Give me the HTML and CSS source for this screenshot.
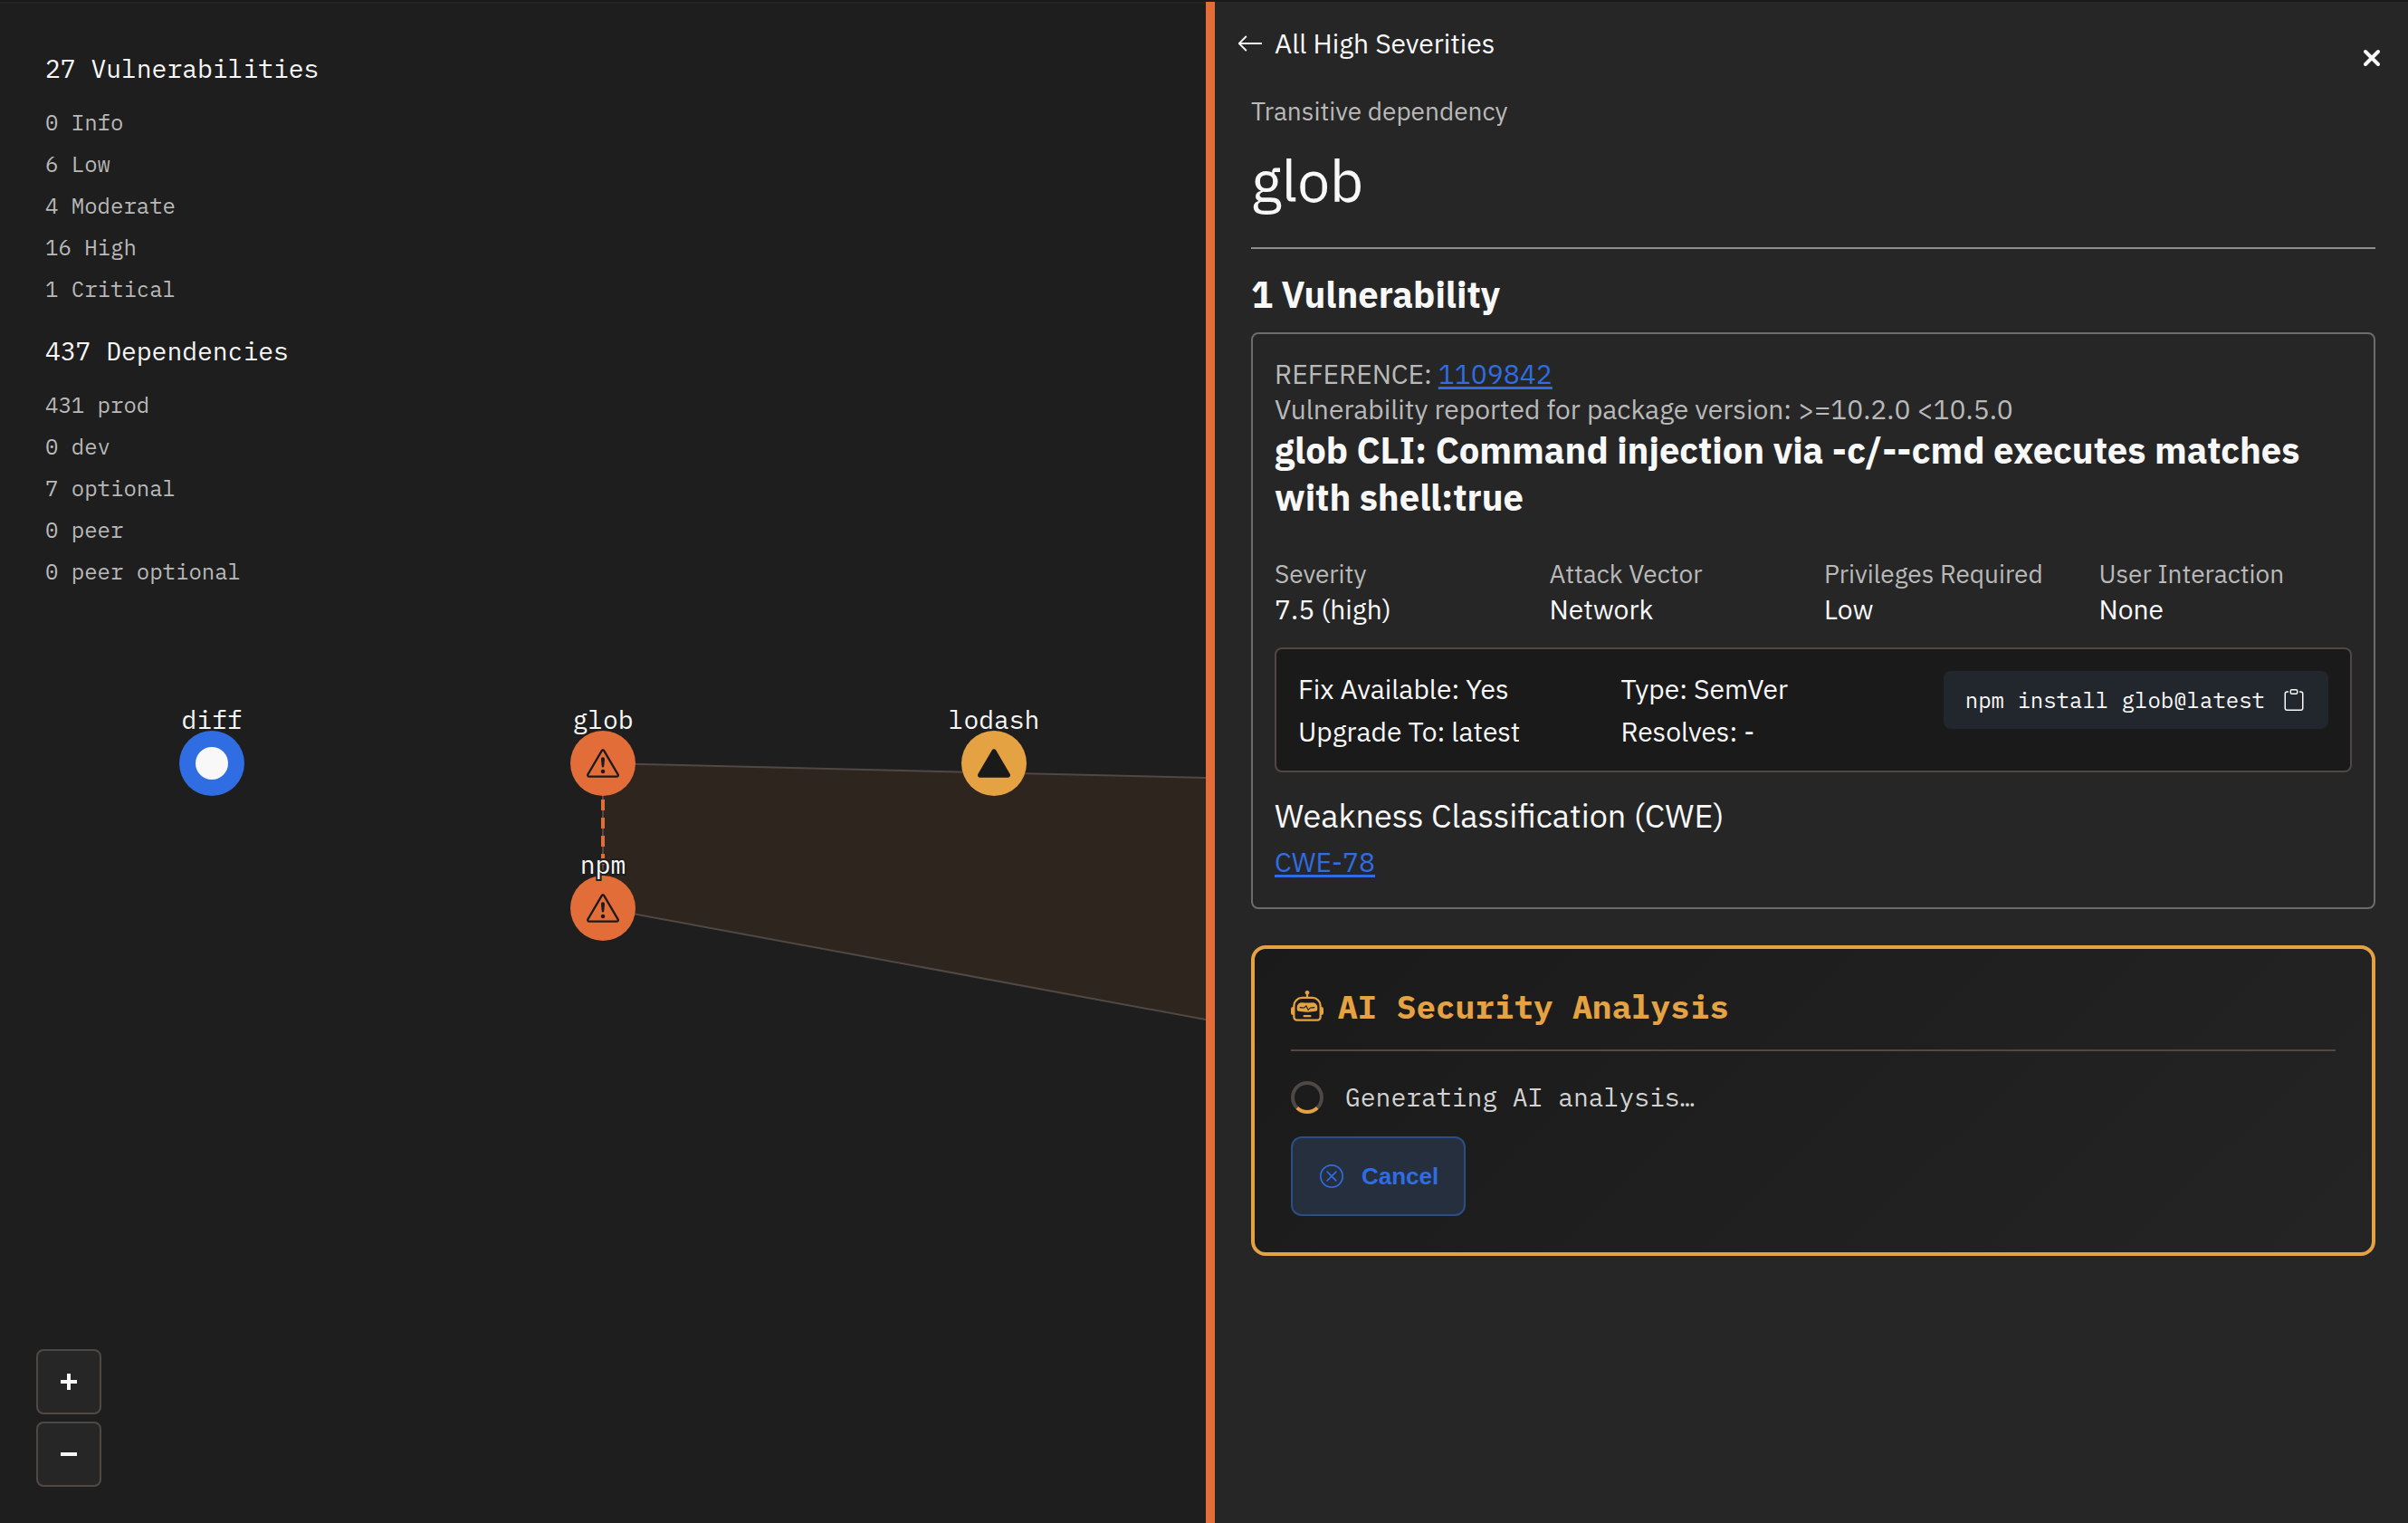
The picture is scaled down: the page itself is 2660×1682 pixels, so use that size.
FILE: index.html
```html
<!DOCTYPE html>
<html lang="en">
<head>
<meta charset="utf-8">
<title>Dependency vulnerabilities</title>
<link rel="stylesheet" href="styles.css">
</head>
<body>
<div class="app">
  <main class="graph">
    <svg class="graph-canvas" role="img" aria-label="Dependency graph">
      <path class="hull" d="M666 843 L1332 859 L4000 923 L4000 1618 L1332 1126 L666 1003 Z"/>
      <line class="link" x1="666" y1="843" x2="666" y2="1003"/>
      <g>
        <circle class="low" cx="234" cy="843" r="36"/>
        <circle class="dot" cx="234" cy="843" r="18"/>
        <text class="node-label" x="234" y="805">diff</text>
      </g>
      <g>
        <circle class="high" cx="666" cy="843" r="36"/>
        <svg class="glyph" x="648" y="825" width="36" height="36" viewBox="0 0 16 16"><path d="M7.938 2.016A.13.13 0 0 1 8.002 2a.13.13 0 0 1 .063.016.15.15 0 0 1 .054.057l6.857 11.667c.036.06.035.124.002.183a.2.2 0 0 1-.054.06.1.1 0 0 1-.066.017H1.146a.1.1 0 0 1-.066-.017.2.2 0 0 1-.054-.06.18.18 0 0 1 .002-.183L7.884 2.073a.15.15 0 0 1 .054-.057m1.044-.45a1.13 1.13 0 0 0-1.96 0L.165 13.233c-.457.778.091 1.767.98 1.767h13.713c.889 0 1.438-.99.98-1.767z"/><path d="M7.002 12a1 1 0 1 1 2 0 1 1 0 0 1-2 0M7.1 5.995a.905.905 0 1 1 1.8 0l-.35 3.507a.552.552 0 0 1-1.1 0z"/></svg>
        <text class="node-label" x="666" y="805">glob</text>
      </g>
      <g>
        <circle class="high" cx="666" cy="1003" r="36"/>
        <svg class="glyph" x="648" y="985" width="36" height="36" viewBox="0 0 16 16"><path d="M7.938 2.016A.13.13 0 0 1 8.002 2a.13.13 0 0 1 .063.016.15.15 0 0 1 .054.057l6.857 11.667c.036.06.035.124.002.183a.2.2 0 0 1-.054.06.1.1 0 0 1-.066.017H1.146a.1.1 0 0 1-.066-.017.2.2 0 0 1-.054-.06.18.18 0 0 1 .002-.183L7.884 2.073a.15.15 0 0 1 .054-.057m1.044-.45a1.13 1.13 0 0 0-1.96 0L.165 13.233c-.457.778.091 1.767.98 1.767h13.713c.889 0 1.438-.99.98-1.767z"/><path d="M7.002 12a1 1 0 1 1 2 0 1 1 0 0 1-2 0M7.1 5.995a.905.905 0 1 1 1.8 0l-.35 3.507a.552.552 0 0 1-1.1 0z"/></svg>
        <text class="node-label" x="666" y="965">npm</text>
      </g>
      <g>
        <circle class="moderate" cx="1098" cy="843" r="36"/>
        <svg class="glyph" x="1080" y="825" width="36" height="36" viewBox="0 0 16 16"><path d="M7.022 1.566a1.13 1.13 0 0 1 1.96 0l6.857 11.667c.457.778-.092 1.767-.98 1.767H1.144c-.889 0-1.437-.99-.98-1.767z"/></svg>
        <text class="node-label" x="1098" y="805">lodash</text>
      </g>
    </svg>

    <div class="stats">
      <section>
        <h2>27 Vulnerabilities</h2>
        <ul>
          <li>0 Info</li>
          <li>6 Low</li>
          <li>4 Moderate</li>
          <li>16 High</li>
          <li>1 Critical</li>
        </ul>
      </section>
      <section>
        <h2>437 Dependencies</h2>
        <ul>
          <li>431 prod</li>
          <li>0 dev</li>
          <li>7 optional</li>
          <li>0 peer</li>
          <li>0 peer optional</li>
        </ul>
      </section>
    </div>

    <div class="zoom">
      <button type="button" aria-label="Zoom in"><svg width="18" height="18" viewBox="0 0 18 18"><path d="M0 9h18M9 0v18"/></svg></button>
      <button type="button" aria-label="Zoom out"><svg width="18" height="18" viewBox="0 0 18 18"><path d="M0 9h18"/></svg></button>
    </div>
  </main>

  <aside class="panel">
    <header class="panel-head">
      <a class="back" href="#high">
        <svg width="30" height="30" viewBox="0 0 16 16" fill="currentColor"><path d="M15 8a.5.5 0 0 0-.5-.5H2.707l3.147-3.146a.5.5 0 1 0-.708-.708l-4 4a.5.5 0 0 0 0 .708l4 4a.5.5 0 0 0 .708-.708L2.707 8.5H14.5A.5.5 0 0 0 15 8"/></svg>
        <span>All High Severities</span>
      </a>
      <button class="close" type="button" aria-label="Close"><svg width="20" height="20" viewBox="0 0 20 20"><path d="M3 3l14 14M17 3L3 17"/></svg></button>
    </header>

    <div class="panel-body">
      <p class="kind">Transitive dependency</p>
      <h1>glob</h1>
      <h2 class="count">1 Vulnerability</h2>

      <article class="card">
        <p class="muted">REFERENCE: <a href="#1109842">1109842</a></p>
        <p class="muted">Vulnerability reported for package version: &gt;=10.2.0 &lt;10.5.0</p>
        <h3>glob CLI: Command injection via -c/--cmd executes matches with shell:true</h3>
        <dl class="metrics">
          <div><dt>Severity</dt><dd>7.5 (high)</dd></div>
          <div><dt>Attack Vector</dt><dd>Network</dd></div>
          <div><dt>Privileges Required</dt><dd>Low</dd></div>
          <div><dt>User Interaction</dt><dd>None</dd></div>
        </dl>
        <div class="fix">
          <div class="fix-col"><p>Fix Available: Yes</p><p>Upgrade To: latest</p></div>
          <div class="fix-col"><p>Type: SemVer</p><p>Resolves: -</p></div>
          <button class="copy" type="button">
            <span>npm install glob@latest</span>
            <svg width="24" height="24" viewBox="0 0 16 16" fill="currentColor"><path d="M4 1.5H3a2 2 0 0 0-2 2V14a2 2 0 0 0 2 2h10a2 2 0 0 0 2-2V3.5a2 2 0 0 0-2-2h-1v1h1a1 1 0 0 1 1 1V14a1 1 0 0 1-1 1H3a1 1 0 0 1-1-1V3.5a1 1 0 0 1 1-1h1z"/><path d="M9.5 1a.5.5 0 0 1 .5.5v1a.5.5 0 0 1-.5.5h-3a.5.5 0 0 1-.5-.5v-1a.5.5 0 0 1 .5-.5zm-3-1A1.5 1.5 0 0 0 5 1.5v1A1.5 1.5 0 0 0 6.5 4h3A1.5 1.5 0 0 0 11 2.5v-1A1.5 1.5 0 0 0 9.5 0z"/></svg>
          </button>
        </div>
        <h4>Weakness Classification (CWE)</h4>
        <p><a href="#cwe-78">CWE-78</a></p>
      </article>

      <section class="ai">
        <h2 class="ai-title">
          <svg width="36" height="36" viewBox="0 0 16 16" fill="currentColor"><path d="M6 12.5a.5.5 0 0 1 .5-.5h3a.5.5 0 0 1 0 1h-3a.5.5 0 0 1-.5-.5M3 8.062C3 6.76 4.235 5.765 5.53 5.886a26.6 26.6 0 0 0 4.94 0C11.765 5.765 13 6.76 13 8.062v1.157a.93.93 0 0 1-.765.935c-.845.147-2.34.346-4.235.346s-3.39-.2-4.235-.346A.93.93 0 0 1 3 9.219zm4.542-.827a.25.25 0 0 0-.217.068l-.92.9a25 25 0 0 1-1.871-.183.25.25 0 0 0-.068.495c.55.076 1.232.149 2.02.193a.25.25 0 0 0 .189-.071l.754-.736.847 1.71a.25.25 0 0 0 .404.062l.932-.97a25 25 0 0 0 1.922-.188.25.25 0 0 0-.068-.495c-.538.074-1.207.145-1.98.189a.25.25 0 0 0-.166.076l-.754.785-.842-1.7a.25.25 0 0 0-.182-.135"/><path d="M8.5 1.866a1 1 0 1 0-1 0V3h-2A4.5 4.5 0 0 0 1 7.5V8a1 1 0 0 0-1 1v2a1 1 0 0 0 1 1v1a2 2 0 0 0 2 2h10a2 2 0 0 0 2-2v-1a1 1 0 0 0 1-1V9a1 1 0 0 0-1-1v-.5A4.5 4.5 0 0 0 10.5 3h-2zM14 7.5V13a1 1 0 0 1-1 1H3a1 1 0 0 1-1-1V7.5A3.5 3.5 0 0 1 5.5 4h5A3.5 3.5 0 0 1 14 7.5"/></svg>
          <span>AI Security Analysis</span>
        </h2>
        <p class="progress"><span class="spinner"></span><span>Generating AI analysis…</span></p>
        <button class="cancel" type="button">
          <svg width="26" height="26" viewBox="0 0 16 16" fill="currentColor"><path d="M8 15A7 7 0 1 1 8 1a7 7 0 0 1 0 14m0 1A8 8 0 1 0 8 0a8 8 0 0 0 0 16"/><path d="M4.646 4.646a.5.5 0 0 1 .708 0L8 7.293l2.646-2.647a.5.5 0 0 1 .708.708L8.707 8l2.647 2.646a.5.5 0 0 1-.708.708L8 8.707l-2.646 2.647a.5.5 0 0 1-.708-.708L7.293 8 4.646 5.354a.5.5 0 0 1 0-.708"/></svg>
          <span>Cancel</span>
        </button>
      </section>
    </div>
  </aside>
</div>
</body>
</html>
```
FILE: styles.css
```css
:root {
  --bg: #1e1e1e;
  --panel: #262626;
  --inset: #1a1a1a;
  --text: #f8f8f8;
  --muted: #b9b9b9;
  --line: #504844;
  --orange: #e26d38;
  --amber: #e5a243;
  --blue: #306ce2;
  --sans: "IBM Plex Sans", Roboto, sans-serif;
  --mono: "IBM Plex Mono", "Liberation Mono", monospace;
}

* {
  box-sizing: border-box;
  margin: 0;
  padding: 0;
}

body {
  background: var(--bg);
  color: var(--text);
  font: 30px/39px var(--sans);
}

ul {
  list-style: none;
}

button {
  color: inherit;
  font: inherit;
  border: 0;
  background: none;
  display: flex;
  align-items: center;
  justify-content: center;
}

a {
  color: var(--blue);
  text-underline-offset: 3px;
  text-decoration-thickness: 3px;
}

svg {
  flex: none;
}

.app {
  display: grid;
  grid-template-columns: minmax(0, 1fr) calc(50% - 2px);
  min-height: 100vh;
  border-top: 2px solid #1a1a1a;
}

/* Dependency graph */

.graph {
  position: relative;
  display: flex;
  flex-direction: column;
  justify-content: space-between;
  padding: 54px 40px 40px;
  border-top: 2px solid #232323;
}

.graph-canvas {
  position: absolute;
  inset: -4px 0 0;
  width: 100%;
  height: 100%;
}

.hull {
  fill: #2e251f;
  stroke: var(--line);
  stroke-width: 2px;
}

.link {
  stroke: var(--orange);
  stroke-width: 4px;
  stroke-dasharray: 12 8;
}

.low {
  fill: var(--blue);
}

.high {
  fill: var(--orange);
}

.moderate {
  fill: var(--amber);
}

.dot {
  fill: var(--text);
}

.glyph {
  fill: var(--inset);
}

.node-label {
  fill: var(--text);
  stroke: var(--bg);
  stroke-width: 4px;
  paint-order: stroke;
  text-anchor: middle;
  font: 28px var(--mono);
}

.stats {
  position: relative;
  display: grid;
  gap: 28px;
  padding-left: 10px;
  font-family: var(--mono);
}

.stats h2 {
  font-size: 28px;
  line-height: 36px;
  font-weight: 400;
  margin-bottom: 18px;
}

.stats li {
  font-size: 24px;
  line-height: 46px;
  color: var(--muted);
}

.zoom {
  position: relative;
  display: grid;
  gap: 8px;
  justify-content: start;
}

.zoom button {
  width: 72px;
  height: 72px;
  background: var(--panel);
  border: 2px solid var(--line);
  border-radius: 8px;
}

.zoom svg,
.close svg {
  fill: none;
  stroke: currentColor;
  stroke-width: 4px;
}

/* Detail panel */

.panel {
  background: var(--panel);
  border-left: 10px solid var(--orange);
  padding: 26px 36px 40px 24px;
}

.panel-head {
  display: flex;
  align-items: flex-start;
  justify-content: space-between;
}

.back {
  display: flex;
  align-items: center;
  gap: 12px;
  color: var(--text);
  text-decoration: none;
}

.close {
  width: 44px;
  height: 44px;
  margin: 14px -18px -14px 0;
}

.close svg {
  stroke-linecap: round;
}

.panel-body {
  padding-left: 16px;
}

.kind {
  margin-top: 33px;
  font-size: 28px;
  line-height: 36px;
  color: var(--muted);
}

h1 {
  padding: 16px 0 32px;
  font-size: 64px;
  line-height: 84px;
  font-weight: 400;
  border-bottom: 2px solid #8f8f8f;
}

.count,
.card h3 {
  font-size: 40px;
  line-height: 52px;
  font-weight: 700;
}

.count {
  margin: 24px 0 16px;
}

.card {
  padding: 24px 24px 31px;
  border: 2px solid #6c6c6c;
  border-radius: 8px;
}

.muted {
  color: var(--muted);
}

.metrics {
  display: grid;
  grid-template-columns: repeat(4, 1fr);
  gap: 24px;
  margin: 40px 0 23px;
}

.metrics dt {
  font-size: 28px;
  line-height: 38px;
  color: var(--muted);
}

.fix {
  display: grid;
  grid-template-columns: 1fr 1fr auto;
  align-items: start;
  gap: 24px;
  padding: 24px;
  background: var(--inset);
  border: 2px solid var(--line);
  border-radius: 8px;
}

.fix-col {
  display: grid;
  gap: 8px;
}

.copy {
  height: 64px;
  gap: 20px;
  padding: 0 26px 0 24px;
  background: #22262d;
  border-radius: 8px;
  font: 24px/32px var(--mono);
}

.card h4 {
  margin: 24px 0 8px;
  font-size: 36px;
  line-height: 47px;
  font-weight: 400;
}

.ai {
  margin-top: 40px;
  padding: 40px;
  border: 4px solid var(--amber);
  border-radius: 16px;
  background: linear-gradient(135deg, #1a1a1a, #242424);
  font-family: var(--mono);
}

.ai-title {
  display: flex;
  align-items: center;
  gap: 16px;
  padding-bottom: 23px;
  border-bottom: 2px solid var(--line);
  color: var(--amber);
  font-size: 36px;
  line-height: 48px;
}

.progress {
  display: flex;
  align-items: center;
  gap: 24px;
  margin: 32px 0 24px;
  color: #d3d3d3;
  font-size: 28px;
  line-height: 38px;
}

.spinner {
  width: 36px;
  height: 36px;
  border: 4px solid var(--line);
  border-bottom-color: var(--amber);
  border-radius: 50%;
}

.cancel {
  height: 88px;
  gap: 20px;
  padding: 0 28px 0 30px;
  background: #252f3e;
  border: 2px solid #2b4f84;
  border-radius: 12px;
  color: var(--blue);
  font: 700 26px/34px "Liberation Sans", Arial, sans-serif;
}
```
